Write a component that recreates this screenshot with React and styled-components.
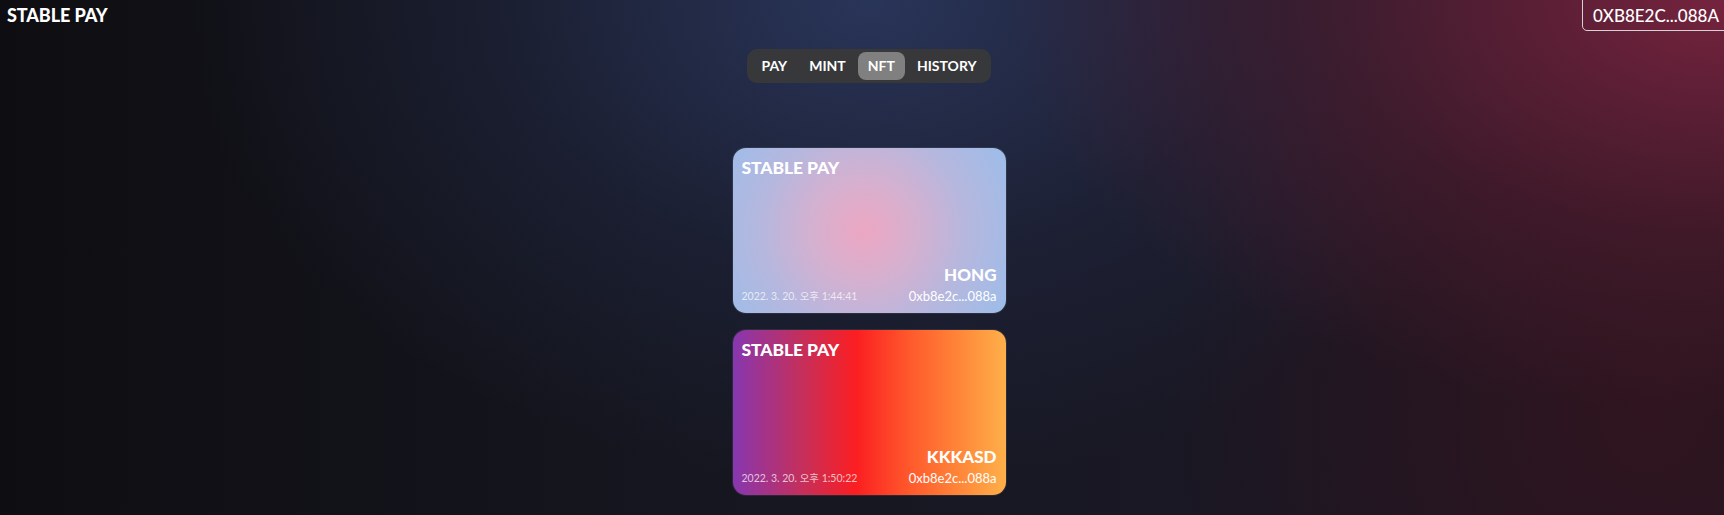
import React from 'react';
import styled, { createGlobalStyle } from 'styled-components';

const GlobalStyle = createGlobalStyle`
  html, body {
    margin: 0;
    padding: 0;
    overflow: hidden;
  }
  body {
    font-family: Lato, "Noto Sans", "Noto Sans CJK KR", sans-serif;
    color: #fff;
  }
`;

const tabs = ['PAY', 'MINT', 'NFT', 'HISTORY'];

const cards = [
  {
    name: 'HONG',
    date: '2022. 3. 20. 오후 1:44:41',
    address: '0xb8e2c...088a',
    variant: 'pastel',
  },
  {
    name: 'KKKASD',
    date: '2022. 3. 20. 오후 1:50:22',
    address: '0xb8e2c...088a',
    variant: 'sunset',
  },
];

const App = () => {
  return (
    <Page>
      <GlobalStyle />
      <Header>
        <Logo>STABLE PAY</Logo>
        <WalletButton>0XB8E2C...088A</WalletButton>
      </Header>
      <Main>
        <Nav>
          {tabs.map((tab) => (
            <Tab key={tab} $active={tab === 'NFT'}>
              {tab}
            </Tab>
          ))}
        </Nav>
        <CardList>
          {cards.map((card) => (
            <Card key={card.name} $variant={card.variant}>
              <CardBrand>STABLE PAY</CardBrand>
              <CardBottom>
                <CardDate>{card.date}</CardDate>
                <CardOwner>
                  <CardName>{card.name}</CardName>
                  <CardAddress>{card.address}</CardAddress>
                </CardOwner>
              </CardBottom>
            </Card>
          ))}
        </CardList>
      </Main>
    </Page>
  );
};

const Page = styled.div`
  display: flex;
  flex-direction: column;

  width: 100%;
  min-height: 100vh;

  background:
    radial-gradient(ellipse 900px 520px at 100% 0%, rgba(122, 36, 64, 0.95) 0%, rgba(84, 28, 48, 0.55) 45%, rgba(0, 0, 0, 0) 80%),
    radial-gradient(ellipse 700px 700px at 1650px 420px, rgba(62, 20, 30, 0.6) 0%, rgba(0, 0, 0, 0) 70%),
    radial-gradient(ellipse 760px 540px at 870px 0%, rgba(42, 54, 92, 0.95) 0%, rgba(32, 38, 64, 0.55) 50%, rgba(0, 0, 0, 0) 90%),
    linear-gradient(90deg, #0e0e12 0%, #15161f 40%, #181824 60%, #1a1520 100%);
`;

const Header = styled.header`
  display: flex;
  justify-content: space-between;
  align-items: flex-start;

  width: 100%;
  height: 31px;
`;

const Logo = styled.h1`
  margin: 0;
  padding: 4px 7px;

  font-size: 18px;
  font-weight: 900;
  letter-spacing: -0.1px;
`;

const WalletButton = styled.button`
  height: 36px;
  margin-top: -5px;
  margin-right: -10px;
  padding: 5px 14px 0 10px;

  border: 1px solid #d8d0d4;
  border-radius: 5px;
  background: transparent;
  color: #fff;

  font-family: Lato, sans-serif;
  font-size: 17px;
  font-weight: 500;
`;

const Main = styled.main`
  display: flex;
  flex-direction: column;
  align-items: center;

  padding-left: 14px;
`;

const Nav = styled.nav`
  display: flex;
  align-items: center;
  gap: 2px;

  margin-top: 18px;
  padding: 3px 4px;

  border-radius: 10px;
  background-color: rgba(58, 58, 58, 0.92);
`;

const Tab = styled.div`
  padding: 7px 10px;

  border-radius: 8px;
  background-color: ${({ $active }) => ($active ? '#808080' : 'transparent')};

  font-size: 14px;
  font-weight: 700;
  line-height: 14px;
`;

const CardList = styled.div`
  display: flex;
  flex-direction: column;
  gap: 17px;

  margin-top: 65px;
`;

const Card = styled.article`
  display: flex;
  flex-direction: column;
  justify-content: space-between;

  box-sizing: border-box;
  width: 273px;
  height: 165px;
  padding: 9px 9px 9px 9px;

  border-radius: 13px;
  box-shadow: 0 0 0 1px rgba(255, 255, 255, 0.08);
  background: ${({ $variant }) =>
    $variant === 'pastel'
      ? 'radial-gradient(circle at 48% 50%, #eca6c2 0%, #d6b0cf 30%, #b6b7de 62%, #9cbde9 100%)'
      : 'linear-gradient(90deg, #8737b0 0%, #c42f5c 25%, #fb1e21 45%, #ff5a2c 65%, #ff8438 82%, #feb04a 100%)'};
`;

const CardBrand = styled.span`
  font-size: 17.5px;
  font-weight: 900;
  letter-spacing: -0.1px;
`;

const CardBottom = styled.div`
  display: flex;
  justify-content: space-between;
  align-items: flex-end;
`;

const CardDate = styled.span`
  margin-bottom: 1px;

  color: rgba(255, 255, 255, 0.72);
  font-size: 10.5px;
  font-weight: 400;
`;

const CardOwner = styled.div`
  display: flex;
  flex-direction: column;
  align-items: flex-end;
  gap: 3px;
`;

const CardName = styled.span`
  font-size: 17px;
  font-weight: 900;
`;

const CardAddress = styled.span`
  font-size: 13px;
  font-weight: 400;
`;

export default App;
